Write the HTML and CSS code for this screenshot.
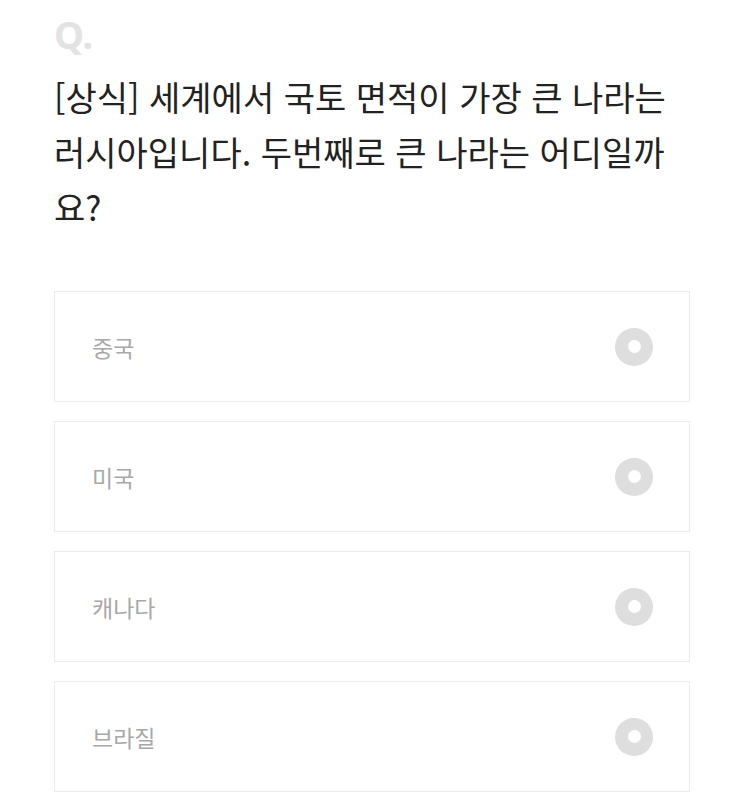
FILE: index.html
```html
<!DOCTYPE html>
<html lang="ko">
<head>
    <meta charset="UTF-8">
    <meta name="viewport" content="width=device-width, initial-scale=1.0">
    <title>퀴즈</title>
    <link rel="stylesheet" href="styles.css">
</head>
<body>
    <div class="quiz">
        <div class="quiz-mark">Q.</div>
        <p class="question">[상식] 세계에서 국토 면적이 가장 큰 나라는 러시아입니다. 두번째로 큰 나라는 어디일까요?</p>
        <ul class="options">
            <li class="option"><span class="label">중국</span><span class="radio"></span></li>
            <li class="option"><span class="label">미국</span><span class="radio"></span></li>
            <li class="option"><span class="label">캐나다</span><span class="radio"></span></li>
            <li class="option"><span class="label">브라질</span><span class="radio"></span></li>
        </ul>
    </div>
</body>
</html>
```

FILE: styles.css
```css
body {
    margin: 0;
    background: #fff;
    font-family: "Noto Sans CJK KR", "Noto Sans", sans-serif;
    color: #222;
}
.quiz {
    padding: 0 53px 0 54px;
}
.quiz-mark {
    font-family: "Noto Sans", sans-serif;
    font-weight: bold;
    font-size: 38px;
    line-height: 1;
    color: #e3e3e3;
    padding-top: 15px;
}
.question {
    margin: 16px 0 0;
    font-size: 34px;
    line-height: 55px;
    font-weight: 400;
}
.options {
    list-style: none;
    margin: 57px 0 0;
    padding: 0;
}
.option {
    display: flex;
    align-items: center;
    justify-content: space-between;
    height: 109px;
    border: 1px solid #ebebeb;
    padding: 0 36px 0 37px;
    margin-bottom: 19px;
}
.label {
    font-size: 23px;
    color: #a8a8a8;
}
.radio {
    width: 38px;
    height: 38px;
    border-radius: 50%;
    background: #dedede;
    display: flex;
    align-items: center;
    justify-content: center;
}
.radio::after {
    content: "";
    width: 13px;
    height: 13px;
    border-radius: 50%;
    background: #fff;
}
```
